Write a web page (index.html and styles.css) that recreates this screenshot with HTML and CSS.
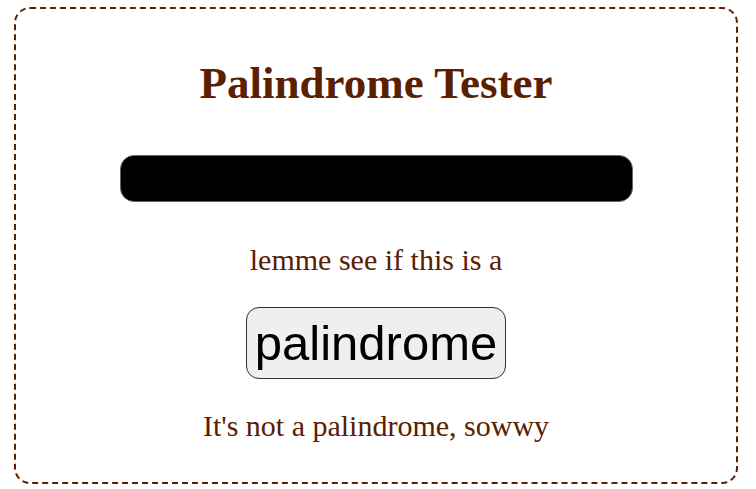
FILE: index.html
```html
<!DOCTYPE html>
<html>
<head>
<meta charset="utf-8">
<link rel="stylesheet" href="styles.css">
</head>
<body>
<div class="card">
  <h1 class="title">Palindrome Tester</h1>
  <input class="text-input" type="text">
  <p class="prompt">lemme see if this is a</p>
  <button class="check-btn">palindrome</button>
  <p class="result">It's not a palindrome, sowwy</p>
</div>
</body>
</html>
```
FILE: styles.css
```css
html, body {
  margin: 0;
  padding: 0;
  background: #ffffff;
}
body {
  padding: 7px 0 0 14px;
  font-family: "Liberation Serif", "Times New Roman", serif;
  color: #5a2000;
}
.card {
  box-sizing: border-box;
  width: 724px;
  height: 477px;
  border: 2px dashed #5a2000;
  border-radius: 16px;
  display: flex;
  flex-direction: column;
  align-items: center;
}
.title {
  margin: 49px 0 0 0;
  font-size: 45px;
  font-weight: bold;
  line-height: 50px;
}
.text-input {
  box-sizing: border-box;
  margin-top: 47px;
  width: 513px;
  height: 47px;
  background: #000000;
  border: 1px solid #666666;
  border-radius: 14px;
  outline: none;
}
.prompt {
  margin: 41px 0 0 0;
  font-size: 30px;
  line-height: 34px;
}
.check-btn {
  box-sizing: border-box;
  margin-top: 30px;
  height: 72px;
  padding: 0 8px;
  font-family: "Liberation Sans", Arial, sans-serif;
  font-size: 49px;
  color: #000000;
  background: #efefef;
  border: 1px solid #333333;
  border-radius: 13px;
}
.result {
  margin: 30px 0 0 0;
  font-size: 30px;
  line-height: 34px;
}
```
